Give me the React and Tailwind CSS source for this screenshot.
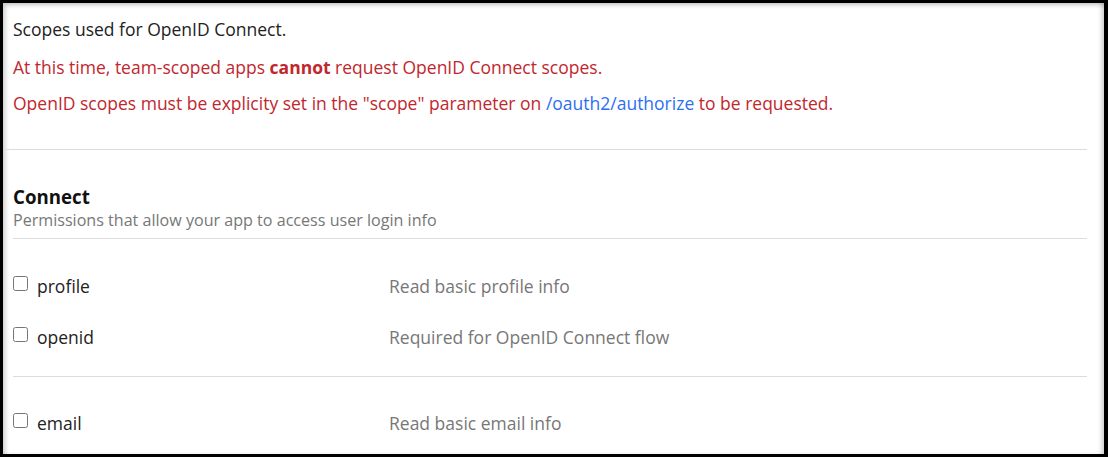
import React from "react";

const rowsA = [
  { name: "profile", desc: "Read basic profile info" },
  { name: "openid", desc: "Required for OpenID Connect flow" },
];

function ScopeRow({ name, desc }) {
  return (
    <div className="grid grid-cols-[376px_1fr] items-center h-6 text-[17.5px] leading-6">
      <label className="flex items-center">
        <input type="checkbox" className="m-0 w-[15px] h-[15px] mr-[9px] -mt-[5px]" />
        <span className="text-[#222]">{name}</span>
      </label>
      <span className="text-[#777]">{desc}</span>
    </div>
  );
}

export default function App() {
  return (
    <div
      className="h-[457px] w-[1108px] bg-white border-[3px] border-r-4 border-black shadow-[inset_4px_4px_5px_-2px_rgba(0,0,0,0.22),inset_-4px_0_5px_-2px_rgba(0,0,0,0.22)] overflow-hidden"
      style={{ fontFamily: '"Open Sans", "Liberation Sans", sans-serif' }}
    >
      <div className="pt-[14px] pl-[10px] pr-[17px] text-[17.5px] leading-6">
        <p className="text-[#222] mb-[14px]">Scopes used for OpenID Connect.</p>
        <p className="text-[#c1272d] mb-[12px]">
          At this time, team-scoped apps <strong className="font-bold">cannot</strong> request OpenID Connect scopes.
        </p>
        <p className="text-[#c1272d]">
          OpenID scopes must be explicity set in the "scope" parameter on{" "}
          <a className="text-[#2d6ff2]">/oauth2/authorize</a> to be requested.
        </p>
      </div>
      <div className="mt-[34px] mr-[17px] border-t border-[#dcdcdc]" />
      <div className="pl-[10px] pr-[17px]">
        <div className="pt-[35px]">
          <h3 className="text-[18.7px] leading-6 font-bold text-[#111]">Connect</h3>
          <p className="text-[16.1px] leading-[22px] text-[#777]">Permissions that allow your app to access user login info</p>
        </div>
        <div className="mt-[7px] border-t border-[#dcdcdc] pt-[35px] pb-[27px] flex flex-col gap-[27px]">
          {rowsA.map((r) => (
            <ScopeRow key={r.name} {...r} />
          ))}
        </div>
        <div className="border-t border-[#dcdcdc] pt-[34px]">
          <ScopeRow name="email" desc="Read basic email info" />
        </div>
      </div>
    </div>
  );
}
